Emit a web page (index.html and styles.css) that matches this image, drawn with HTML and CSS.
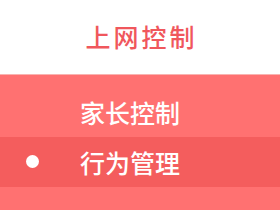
FILE: index.html
```html
<!DOCTYPE html>
<html lang="zh-CN">
<head>
    <meta charset="UTF-8">
    <meta name="viewport" content="width=device-width, initial-scale=1.0">
    <title>上网控制</title>
    <link rel="stylesheet" href="styles.css">
</head>
<body>
    <header>
        <h1>上网控制</h1>
    </header>
    <ul class="menu">
        <li class="item">家长控制</li>
        <li class="item active"><span class="dot"></span>行为管理</li>
    </ul>
</body>
</html>
```
FILE: styles.css
```css
* {
    margin: 0;
    padding: 0;
    box-sizing: border-box;
}
body {
    font-family: 'Noto Sans CJK SC', 'Noto Sans', sans-serif;
    background: #ff7171;
    width: 280px;
    height: 210px;
    overflow: hidden;
}
header {
    background: #fff;
    height: 75px;
    border-bottom: 1px solid #f9b3b0;
    display: flex;
    align-items: center;
    justify-content: center;
}
header h1 {
    font-size: 25px;
    font-weight: 500;
    color: #f0575c;
    letter-spacing: 3px;
    padding-left: 3px;
    padding-bottom: 2px;
}
.menu {
    list-style: none;
    padding-top: 12px;
}
.item {
    height: 50px;
    display: flex;
    align-items: center;
    padding-left: 80px;
    font-size: 25px;
    font-weight: 500;
    color: #fff;
    position: relative;
}
.active {
    background: #f45d5d;
}
.dot {
    position: absolute;
    left: 26px;
    top: 18px;
    width: 13px;
    height: 13px;
    border-radius: 50%;
    background: #fff;
}
```
